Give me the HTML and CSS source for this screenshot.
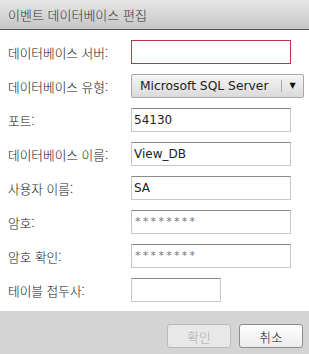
FILE: index.html
```html
<!DOCTYPE html>
<html lang="ko">
<head>
    <meta charset="UTF-8">
    <title>이벤트 데이터베이스 편집</title>
    <link rel="stylesheet" href="styles.css">
</head>
<body>
    <div class="dialog">
        <div class="dialog-title">이벤트 데이터베이스 편집</div>
        <div class="form">
            <div class="row">
                <label>데이터베이스 서버:</label>
                <div class="field invalid"></div>
            </div>
            <div class="row">
                <label>데이터베이스 유형:</label>
                <div class="select">
                    <span class="select-value">Microsoft SQL Server</span>
                    <span class="select-arrow">&#9660;</span>
                </div>
            </div>
            <div class="row">
                <label>포트:</label>
                <div class="field">54130</div>
            </div>
            <div class="row">
                <label>데이터베이스 이름:</label>
                <div class="field">View_DB</div>
            </div>
            <div class="row">
                <label>사용자 이름:</label>
                <div class="field">SA</div>
            </div>
            <div class="row">
                <label>암호:</label>
                <div class="field password">********</div>
            </div>
            <div class="row">
                <label>암호 확인:</label>
                <div class="field password">********</div>
            </div>
            <div class="row">
                <label>테이블 접두사:</label>
                <div class="field short"></div>
            </div>
        </div>
        <div class="dialog-footer">
            <button class="btn" disabled>확인</button>
            <button class="btn">취소</button>
        </div>
    </div>
</body>
</html>
```

FILE: styles.css
```css
body {
    margin: 0;
    padding: 0;
    background: #fff;
}

.dialog {
    width: 309px;
    height: 354px;
    display: flex;
    flex-direction: column;
    font-family: "Noto Sans CJK KR", "DejaVu Sans", sans-serif;
    font-size: 12.7px;
    font-weight: 300;
    color: #111;
}

.dialog-title {
    height: 29px;
    line-height: 29px;
    padding-left: 8px;
    font-size: 13px;
    color: #333;
    background: linear-gradient(#e6e6e6, #c6c6c6);
    border-bottom: 1px solid #555;
}

.form {
    padding: 10px 0 9px 8px;
    display: flex;
    flex-direction: column;
    gap: 10px;
}

.row {
    display: flex;
    align-items: center;
    height: 24px;
}

.row label {
    width: 123px;
    flex-shrink: 0;
}

.field {
    box-sizing: border-box;
    width: 160px;
    height: 24px;
    padding-left: 2px;
    border: 1px solid #c8c8c8;
    border-top-color: #8a8a8a;
    font-family: "DejaVu Sans", sans-serif;
    font-size: 12px;
    font-weight: 400;
    line-height: 22px;
    color: #222;
}

.field.invalid {
    border-color: #b8374a;
}

.field.short {
    width: 90px;
}

.field.password {
    padding-left: 3px;
    font-size: 11px;
    letter-spacing: 2.3px;
    color: #777;
}

.select {
    box-sizing: border-box;
    width: 173px;
    height: 24px;
    display: flex;
    align-items: center;
    border: 1px solid #a8a8a8;
    border-radius: 2px;
    background: linear-gradient(#f6f6f6, #dadada);
    font-family: "DejaVu Sans", sans-serif;
    font-size: 12.3px;
    font-weight: 400;
    color: #222;
}

.select-value {
    flex-grow: 1;
    padding-left: 8px;
}

.select-arrow {
    width: 21px;
    height: 12px;
    line-height: 12px;
    text-align: center;
    font-size: 8px;
    color: #111;
    border-left: 1px solid #a8a8a8;
}

.dialog-footer {
    flex-grow: 1;
    background: #d4d4d4;
    display: flex;
    justify-content: flex-end;
    align-items: flex-start;
    gap: 8px;
    padding: 13px 6px 0 0;
}

.btn {
    width: 64px;
    height: 24px;
    padding: 0;
    border: 1px solid #8c8c8c;
    border-radius: 3px;
    background: linear-gradient(#ffffff, #ececec);
    font-family: "Noto Sans CJK KR", sans-serif;
    font-size: 12.7px;
    font-weight: 300;
    color: #111;
}

.btn:disabled {
    border-color: #b8b8b8;
    background: #e8e8e8;
    color: #a8a8a8;
}
```
